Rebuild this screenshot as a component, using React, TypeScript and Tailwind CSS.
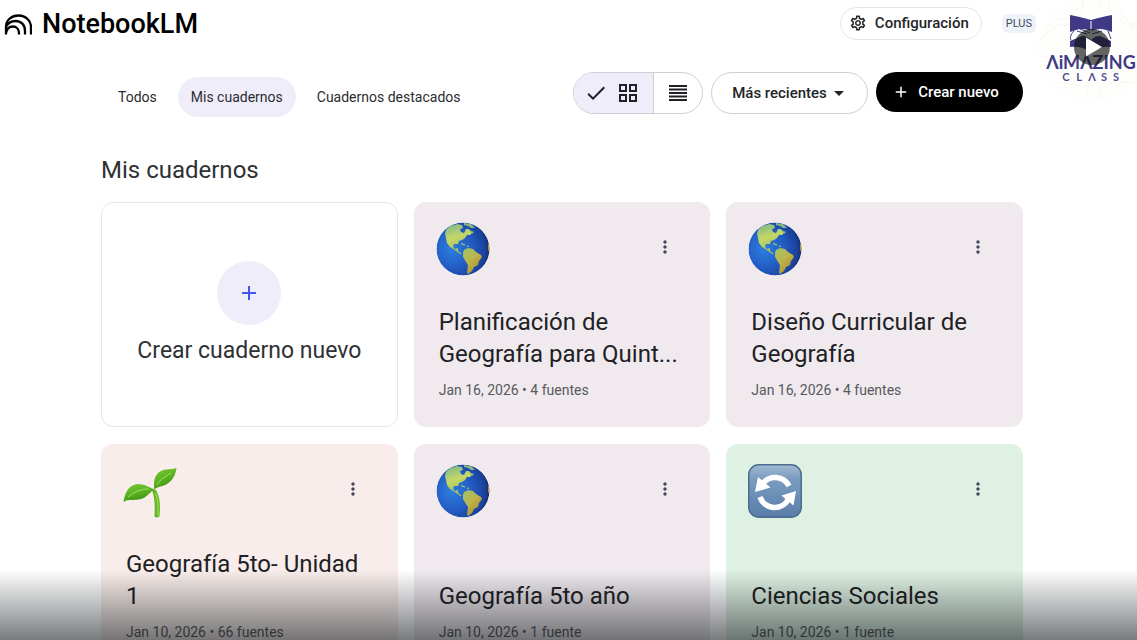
import { useState } from "react";
import type { ReactNode } from "react";
import { clsx } from "clsx";
import { MdAdd, MdArrowDropDown, MdCheck, MdMoreVert, MdOutlineGridView, MdOutlineSettings } from "react-icons/md";

type IconName = "earth" | "seedling" | "refresh";

interface Notebook {
  id: number;
  title: string;
  date: string;
  sources: string;
  icon: IconName;
  color: string;
}

const notebooks: Notebook[] = [
  { id: 1, title: "Planificación de Geografía para Quint...", date: "Jan 16, 2026", sources: "4 fuentes", icon: "earth", color: "bg-[#f0eaef]" },
  { id: 2, title: "Diseño Curricular de Geografía", date: "Jan 16, 2026", sources: "4 fuentes", icon: "earth", color: "bg-[#f0eaef]" },
  { id: 3, title: "Geografía 5to- Unidad 1", date: "Jan 10, 2026", sources: "66 fuentes", icon: "seedling", color: "bg-[#f8edea]" },
  { id: 4, title: "Geografía 5to año", date: "Jan 10, 2026", sources: "1 fuente", icon: "earth", color: "bg-[#f0eaef]" },
  { id: 5, title: "Ciencias Sociales", date: "Jan 10, 2026", sources: "1 fuente", icon: "refresh", color: "bg-[#dff1e3]" },
];

const tabs = ["Todos", "Mis cuadernos", "Cuadernos destacados"];

function NotebookLogo() {
  return (
    <svg viewBox="0 0 28 21" className="h-[21px] w-7" fill="none" stroke="#000" strokeWidth="2.3" aria-hidden="true">
      <path d="M2 20.500V13C2 6 7.500 1.500 14.500 1.500S27 6.500 27 13v7.500" />
      <path d="M2 12.500C4.500 8.500 8 7 11.500 7c5.500 0 9.500 4 9.500 9.500v4" />
      <path d="M2 18.500c1-3.800 3.500-6 6.700-6 4 0 6.300 3 6.300 6.500v1.500" />
    </svg>
  );
}

function Earth() {
  return (
    <svg viewBox="0 0 54 54" className="size-[54px]" aria-hidden="true">
      <defs>
        <radialGradient id="ocean" cx="0.3" cy="0.5" r="0.72">
          <stop offset="0" stopColor="#2d80e0" />
          <stop offset="0.5" stopColor="#235cc4" />
          <stop offset="0.85" stopColor="#1b429c" />
          <stop offset="1" stopColor="#15285f" />
        </radialGradient>
        <linearGradient id="north" x1="0.2" y1="0" x2="0.5" y2="1">
          <stop offset="0" stopColor="#7fb98a" />
          <stop offset="0.45" stopColor="#c3d767" />
          <stop offset="1" stopColor="#a9bd55" />
        </linearGradient>
        <linearGradient id="south" x1="0" y1="0" x2="0.7" y2="1">
          <stop offset="0" stopColor="#9cc468" />
          <stop offset="0.5" stopColor="#bdb64c" />
          <stop offset="1" stopColor="#b18a2c" />
        </linearGradient>
        <clipPath id="globe">
          <circle cx="27" cy="27" r="26.500" />
        </clipPath>
      </defs>
      <g clipPath="url(#globe)">
        <circle cx="27" cy="27" r="26.500" fill="url(#ocean)" />
        <path
          fill="url(#north)"
          d="M10 8l4-4 7-2 5 1 1 3-3 1 1 3 3 1 2-4 3 0 3 4-2 2-3 0-2 3-3 2-3 1-1 3-4 0-1 3 2 2 3-1 0 3 4 3-2 0-5-4-5-3-3-4-1-5-1-4z"
        />
        <path fill="#86b984" d="M28 1l7 1 4 4-4 0-3-2-4-1zM33 8l5 2-2 2z" />
        <path fill="url(#south)" d="M28 28l4-2 5 1 3 3 5 3 1 2-3 4-1 4-4 2-2 4-4 3-1-1 1-8-2-3-3-5 0-4z" />
        <path fill="#a9954a" d="M52 22l3-1v10l-3-3z" />
        <path stroke="#b6cc64" strokeWidth="1.200" fill="none" d="M25 21.500l4 1.500M31 24l2 .5" />
      </g>
    </svg>
  );
}

function Seedling() {
  return (
    <svg viewBox="0 0 54 54" className="size-[54px]" aria-hidden="true">
      <defs>
        <linearGradient id="leaf" x1="0" y1="0" x2="0.4" y2="1">
          <stop offset="0" stopColor="#7ccb3a" />
          <stop offset="0.6" stopColor="#58b01f" />
          <stop offset="1" stopColor="#3c8f14" />
        </linearGradient>
      </defs>
      <path fill="#62b722" d="M29 26h4c4 7 4.500 15 3.500 26-.5 1.700-4 2-5 .5C32 42 32 34 29 26z" />
      <path fill="url(#leaf)" d="M.5 38C2 26 8 20 15.500 20c6.500 0 11 4 16.500 5.500-5 2-8 8-14 9.500-7 2-12.500-.5-17.500 3z" />
      <path fill="url(#leaf)" d="M31.500 26C30 17 32 10.500 37 7.500c6-3.500 11-1.500 16.500-3.500-1 9-6 14.500-11.500 17-5 2-8 1.500-10.500 5z" />
      <path fill="none" stroke="#a2df62" strokeWidth="1" d="M5 33c6-5 12-8 21-8M34 21c3-6 8-8 14-12" />
      <path fill="none" stroke="#9adb55" strokeWidth="1.200" d="M32.500 29c2.500 6 3 11 2.500 22" />
    </svg>
  );
}

function Refresh() {
  return (
    <svg viewBox="0 0 54 54" className="size-[54px]" aria-hidden="true">
      <defs>
        <linearGradient id="tile" x1="0" y1="0" x2="0" y2="1">
          <stop offset="0" stopColor="#a3bbd4" />
          <stop offset="0.25" stopColor="#7c9dc0" />
          <stop offset="1" stopColor="#587da8" />
        </linearGradient>
      </defs>
      <rect x="0.750" y="0.750" width="52.500" height="52.500" rx="10" fill="url(#tile)" stroke="#4d6c8f" strokeWidth="1.500" />
      <g fill="none" stroke="#fff" strokeWidth="5.500">
        <path d="M14.500 20A15.500 15.500 0 0 1 41 22" />
        <path d="M12 33A15.500 15.500 0 0 0 40.500 35" />
      </g>
      <path fill="#fff" d="M10 13L7 28l15.500-4.500zM48 27L33.500 31.500 45.500 41.500z" />
    </svg>
  );
}

const icons: Record<IconName, () => ReactNode> = {
  earth: Earth,
  seedling: Seedling,
  refresh: Refresh,
};

function Header() {
  return (
    <header className="flex h-[46px] items-center justify-between pl-1 pr-[101px]">
      <a href="#" className="flex items-center gap-[10px] pt-0.5 text-[27px] font-medium leading-8 text-black">
        <NotebookLogo />
        NotebookLM
      </a>
      <div className="flex items-center gap-5">
        <button className="flex h-[33px] items-center gap-2 rounded-full border border-[#e4e4e6] px-2 pr-3 text-[15px] font-medium text-[#242527]">
          <MdOutlineSettings className="size-[18px]" />
          Configuración
        </button>
        <span className="rounded-md bg-[#eef3fa] px-1 text-[11px] leading-[19px] text-[#454b57]">PLUS</span>
      </div>
    </header>
  );
}

function Toolbar() {
  const [tab, setTab] = useState("Mis cuadernos");
  const [view, setView] = useState("grid");

  return (
    <div className="flex items-start justify-between">
      <nav className="mt-[5px] flex items-center gap-2 pl-1">
        {tabs.map((name) => (
          <button
            key={name}
            onClick={() => setTab(name)}
            className={clsx(
              "h-10 rounded-full px-[13px] text-sm text-[#2b2c2f]",
              tab === name && "bg-[#efedfa]"
            )}
          >
            {name}
          </button>
        ))}
      </nav>

      <div className="flex items-start gap-2">
        <div className="flex h-[42px] w-[130px] overflow-hidden rounded-full border border-[#d0d0d4]">
          <button
            aria-label="Cuadrícula"
            onClick={() => setView("grid")}
            className={clsx("flex w-20 items-center justify-center gap-2 border-r border-[#d0d0d4] pr-1 text-[#202124]", view === "grid" && "bg-[#efedfa]")}
          >
            <MdCheck className="size-6" />
            <MdOutlineGridView className="size-6" />
          </button>
          <button aria-label="Lista" onClick={() => setView("list")} className="flex flex-1 items-center justify-center">
            <svg viewBox="0 0 18 16" className="h-4 w-[18px]" stroke="#202124" strokeWidth="1.800" aria-hidden="true">
              <path d="M0 1h18M0 4.500h18M0 8h18M0 11.500h18M0 15h18" />
            </svg>
          </button>
        </div>
        <button className="flex h-[42px] w-[157px] items-center justify-center rounded-full border border-[#d0d0d4] pl-1 text-[15px] font-medium text-[#242527]">
          Más recientes
          <MdArrowDropDown className="size-6" />
        </button>
        <button className="flex h-10 w-[147px] items-center justify-center gap-2 rounded-full bg-black pr-2 text-[15px] font-medium text-white">
          <MdAdd className="size-[18px]" />
          Crear nuevo
        </button>
      </div>
    </div>
  );
}

function NotebookCard({ notebook }: { notebook: Notebook }) {
  const Icon = icons[notebook.icon];

  return (
    <article className={clsx("flex h-[225px] flex-col justify-between rounded-xl pb-[27px] pl-[25px] pr-5 pt-5", notebook.color)}>
      <div className="-ml-[3px] flex items-center justify-between pr-[13px]">
        <Icon />
        <button aria-label="Más opciones" className="-mt-1 flex size-6 items-center justify-center text-[#44465f]">
          <MdMoreVert className="size-5" />
        </button>
      </div>
      <div>
        <h2 className="text-2xl leading-8 text-[#202124]">{notebook.title}</h2>
        <p className="mt-[10px] text-sm leading-5 text-[#58595d]">{`${notebook.date} • ${notebook.sources}`}</p>
      </div>
    </article>
  );
}

// Channel badge with the play button that sits over it
function Watermark() {
  return (
    <div className="absolute -right-[7px] -top-[4px] size-[107px] rounded-full bg-[#fefefd]">
      <svg viewBox="0 0 107 107" className="size-full" aria-hidden="true">
        <g fill="none" stroke="#f8f6ef" strokeWidth="1">
          <path d="M6 35l12-12h14l12-14M3 44l17-15h15M12 76h17l11 14h21M20 87h13l9 12M72 4v9l16 15h12M62 3v7l10 8M73 98l12-12h13M63 103V94l13-8h11M4 65h18l6 7M46 4v12L36 27M50 100v-9M83 15l14 18" />
        </g>
        <path fill="#403985" d="M33 19c7 1 14 3 21 5 7-2 14-4 21-5v17l-6-2c-5-2-10-1-15 1-5-2-10-3-15-1l-6 2z" />
        <path fill="#403985" d="M33 45l12-5c4 0 7 2 9 4 2-2 5-4 9-4l11 5v6c-7-1-14 1-20 5-6-4-13-6-21-5z" />
        <path fill="none" stroke="#403985" d="M37 35c-4 4-4 7-3 9M71 35l3 8M40 35l10 3M43 33l10 4M65 35l-10 3" />
        <path fill="none" stroke="#fff" strokeWidth="1" d="M54 25v12" />
        <text x="54" y="73" textAnchor="middle" fill="#403985" fontSize="18" fontWeight="700" fontFamily="Lato, sans-serif">ΛiMΛZING</text>
        <g fill="#544e91" textAnchor="middle" fontSize="11" fontWeight="700" fontFamily="Lato, sans-serif">
          <text x="29" y="85">C</text>
          <text x="42" y="85">L</text>
          <text x="55" y="85">Λ</text>
          <text x="67" y="85">S</text>
          <text x="79" y="85">S</text>
        </g>
      </svg>
      <button aria-label="Reproducir" className="absolute left-[37px] top-[33px] flex size-9 items-center justify-center rounded-full bg-[#101210]/65">
        <svg viewBox="0 0 16 20" className="ml-[3px] h-5 w-4" fill="#fff" aria-hidden="true">
          <path d="M0 0.500L16 10L0 19.500z" />
        </svg>
      </button>
    </div>
  );
}

export default function App() {
  return (
    <div className="relative h-screen overflow-hidden bg-white font-[Roboto,sans-serif]">
      <Header />
      <main className="pl-[101px] pr-[114px] pt-[26px]">
        <Toolbar />
        <h1 className="mt-[37px] text-2xl leading-8 text-[#303134]">Mis cuadernos</h1>
        <div className="mt-4 grid grid-cols-3 gap-x-4 gap-y-[17px]">
          <button className="flex h-[225px] flex-col items-center justify-center gap-2 rounded-xl border border-[#e6e6e8] pt-px text-[23px] leading-9 text-[#303134]">
            <span className="flex size-16 items-center justify-center rounded-full bg-[#efedfa]">
              <MdAdd className="size-6 text-[#4254f4]" />
            </span>
            Crear cuaderno nuevo
          </button>
          {notebooks.map((notebook) => (
            <NotebookCard key={notebook.id} notebook={notebook} />
          ))}
        </div>
      </main>
      <Watermark />
      <div className="pointer-events-none absolute inset-x-0 bottom-0 h-[70px] bg-linear-to-b from-[#0a1014]/0 to-[#0a1014]/55" />
    </div>
  );
}
